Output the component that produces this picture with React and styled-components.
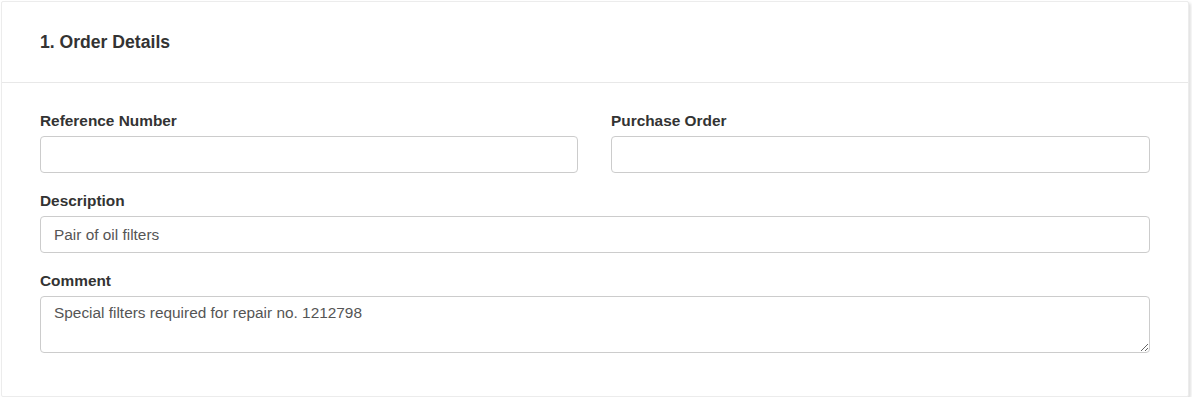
import styled, { createGlobalStyle } from "styled-components";

const GlobalStyle = createGlobalStyle`
  * { box-sizing: border-box; }
  body {
    margin: 0;
    background: #fff;
    font-family: "Liberation Sans", Arial, sans-serif;
    color: #333;
  }
`;

const Page = styled.div`
  padding: 1px 0 0 1px;
`;

const Card = styled.section`
  width: 1188px;
  background: #fff;
  border: 1px solid #ececec;
  border-radius: 2px;
  box-shadow: 2px 2px 3px rgba(0, 0, 0, 0.12);
`;

const CardHeader = styled.header`
  height: 81px;
  padding: 0 38px;
  display: flex;
  align-items: center;
  border-bottom: 1px solid #e8e8e8;
`;

const Title = styled.h2`
  margin: 0;
  font-size: 17.6px;
  font-weight: bold;
  color: #333;
`;

const CardBody = styled.div`
  padding: 28px 38px 25px 38px;
`;

const Row = styled.div`
  display: grid;
  grid-template-columns: 538px 1fr;
  column-gap: 33px;
`;

const FormGroup = styled.div`
  display: flex;
  flex-direction: column;
  margin-bottom: 18px;
`;

const Label = styled.label`
  font-size: 15.4px;
  line-height: 20px;
  font-weight: bold;
  color: #333;
  margin-bottom: 5px;
`;

const Input = styled.input`
  height: 37px;
  width: 100%;
  padding: 0 13px;
  font-family: inherit;
  font-size: 15.4px;
  color: #555;
  border: 1px solid #ccc;
  border-radius: 4px;
  background: #fff;
  outline: none;
`;

const Textarea = styled.textarea`
  height: 57px;
  width: 100%;
  padding: 6px 13px;
  font-family: inherit;
  font-size: 15.4px;
  line-height: 20px;
  color: #555;
  caret-color: #333;
  border: 1px solid #ccc;
  border-radius: 4px;
  background: #fff;
  outline: none;
  resize: vertical;
`;

function moveCaretToEnd(e) {
  const len = e.target.value.length;
  e.target.setSelectionRange(len, len);
}

function Field({ id, label, value, multiline }) {
  return (
    <FormGroup>
      <Label htmlFor={id}>{label}</Label>
      {multiline ? (
        <Textarea
          id={id}
          defaultValue={value}
          autoFocus
          onFocus={moveCaretToEnd}
        />
      ) : (
        <Input id={id} defaultValue={value} />
      )}
    </FormGroup>
  );
}

export default function App() {
  return (
    <Page>
      <GlobalStyle />
      <Card>
        <CardHeader>
          <Title>1. Order Details</Title>
        </CardHeader>
        <CardBody>
          <Row>
            <Field id="ref" label="Reference Number" />
            <Field id="po" label="Purchase Order" />
          </Row>
          <Field id="desc" label="Description" value="Pair of oil filters" />
          <Field
            id="comment"
            label="Comment"
            value="Special filters required for repair no. 1212798"
            multiline
          />
        </CardBody>
      </Card>
    </Page>
  );
}
